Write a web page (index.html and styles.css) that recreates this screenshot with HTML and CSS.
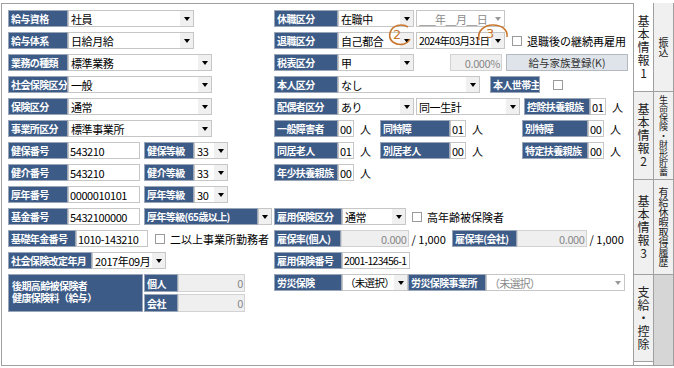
FILE: index.html
```html
<!DOCTYPE html>
<html>
	<head>
		<meta charset="utf-8">
		<title>基本情報1</title>
		<link rel="stylesheet" href="styles.css">
	</head>
	<body>
		<div class="window">
			<div class="panel">

				<!-- left column -->
				<div class="col-left">
					<div class="row">
						<div class="lbl w60">給与資格</div>
						<div class="sel w126"><span class="val">社員</span><i class="arr"></i></div>
					</div>
					<div class="row">
						<div class="lbl w60">給与体系</div>
						<div class="sel w126"><span class="val">日給月給</span><i class="arr"></i></div>
					</div>
					<div class="row">
						<div class="lbl w60">業務の種類</div>
						<div class="sel w144"><span class="val">標準業務</span><i class="arr"></i></div>
					</div>
					<div class="row">
						<div class="lbl w60">社会保険区分</div>
						<div class="sel w144"><span class="val">一般</span><i class="arr"></i></div>
					</div>
					<div class="row">
						<div class="lbl w60">保険区分</div>
						<div class="sel w144"><span class="val">通常</span><i class="arr"></i></div>
					</div>
					<div class="row">
						<div class="lbl w60">事業所区分</div>
						<div class="sel w144"><span class="val">標準事業所</span><i class="arr"></i></div>
					</div>
					<div class="row">
						<div class="lbl w60">健保番号</div>
						<div class="fld w72">543210</div>
						<div class="lbl w50 ml4">健保等級</div>
						<div class="sel w34"><span class="val">33</span><i class="arr"></i></div>
					</div>
					<div class="row">
						<div class="lbl w60">健介番号</div>
						<div class="fld w72">543210</div>
						<div class="lbl w50 ml4">健介等級</div>
						<div class="sel w34"><span class="val">33</span><i class="arr"></i></div>
					</div>
					<div class="row">
						<div class="lbl w60">厚年番号</div>
						<div class="fld w72">0000010101</div>
						<div class="lbl w50 ml4">厚年等級</div>
						<div class="sel w34"><span class="val">30</span><i class="arr"></i></div>
					</div>
					<div class="row">
						<div class="lbl w60">基金番号</div>
						<div class="fld w72">5432100000</div>
						<div class="lbl w114 ml4">厚年等級(65歳以上)</div>
						<div class="sel w14"><i class="arr"></i></div>
					</div>
					<div class="row row-gap">
						<div class="lbl w68">基礎年金番号</div>
						<div class="fld w72">1010-143210</div>
						<i class="chk ml7"></i>
						<span class="txt">二以上事業所勤務者</span>
					</div>
					<div class="row">
						<div class="lbl w84">社会保険改定年月</div>
						<div class="sel w74"><span class="val">2017年09月</span><i class="arr"></i></div>
					</div>
					<div class="block">
						<div class="lbl big">後期高齢被保険者<br>健康保険料（給与）</div>
						<div class="block-rows">
							<div class="block-row">
								<div class="lbl w34">個人</div>
								<div class="fld off w67">0</div>
							</div>
							<div class="block-row">
								<div class="lbl w34">会社</div>
								<div class="fld off w67">0</div>
							</div>
						</div>
					</div>
				</div>

				<!-- middle column -->
				<div class="col-mid">
					<div class="row">
						<div class="lbl w64">休職区分</div>
						<div class="sel w76"><span class="val">在職中</span><i class="arr"></i></div>
						<div class="sel w89 ml2 dim"><span class="val">___年__月__日</span><i class="arr"></i></div>
					</div>
					<div class="row">
						<div class="lbl w64">退職区分</div>
						<div class="sel w76"><span class="val">自己都合</span><i class="arr"></i></div>
						<div class="sel w89 ml2 tight"><span class="val">2024年03月31日</span><i class="arr"></i></div>
						<i class="chk ml7"></i>
						<span class="txt">退職後の継続再雇用</span>
					</div>
					<div class="row">
						<div class="lbl w64">税表区分</div>
						<div class="sel w76"><span class="val">甲</span><i class="arr"></i></div>
						<div class="fld off w52 ml36">0.000%</div>
						<button class="btn">給与家族登録(K)</button>
					</div>
					<div class="row">
						<div class="lbl w64">本人区分</div>
						<div class="sel w142"><span class="val">なし</span><i class="arr"></i></div>
						<div class="lbl w50 ml10">本人世帯主</div>
						<i class="chk ml13"></i>
					</div>
					<div class="row">
						<div class="lbl w64">配偶者区分</div>
						<div class="sel w76"><span class="val">あり</span><i class="arr"></i></div>
						<div class="sel w104 ml2"><span class="val">同一生計</span><i class="arr"></i></div>
						<div class="lbl w66 ml4">控除扶養親族</div>
						<div class="fld w16">01</div>
						<span class="unit">人</span>
					</div>
					<div class="row">
						<div class="lbl w64">一般障害者</div>
						<div class="fld w16">00</div>
						<span class="unit">人</span>
						<div class="lbl w70 ml6">同特障</div>
						<div class="fld w16">01</div>
						<span class="unit">人</span>
						<div class="lbl w66 ml36">別特障</div>
						<div class="fld w16">00</div>
						<span class="unit">人</span>
					</div>
					<div class="row">
						<div class="lbl w64">同居老人</div>
						<div class="fld w16">01</div>
						<span class="unit">人</span>
						<div class="lbl w70 ml6">別居老人</div>
						<div class="fld w16">00</div>
						<span class="unit">人</span>
						<div class="lbl w66 ml36">特定扶養親族</div>
						<div class="fld w16">00</div>
						<span class="unit">人</span>
					</div>
					<div class="row">
						<div class="lbl w64">年少扶養親族</div>
						<div class="fld w16">00</div>
						<span class="unit">人</span>
					</div>
					<div class="row"></div>
					<div class="row">
						<div class="lbl w68">雇用保険区分</div>
						<div class="sel w64"><span class="val">通常</span><i class="arr"></i></div>
						<i class="chk ml6"></i>
						<span class="txt">高年齢被保険者</span>
					</div>
					<div class="row row-gap">
						<div class="lbl w68">雇保率(個人)</div>
						<div class="fld off w68">0.000</div>
						<span class="per">/ 1,000</span>
						<div class="lbl w66">雇保率(会社)</div>
						<div class="fld off w70">0.000</div>
						<span class="per">/ 1,000</span>
					</div>
					<div class="row">
						<div class="lbl w68">雇用保険番号</div>
						<div class="fld w68 tight">2001-123456-1</div>
					</div>
					<div class="row">
						<div class="lbl w68">労災保険</div>
						<div class="sel w66 tight"><span class="val">（未選択）</span><i class="arr"></i></div>
						<div class="lbl w78">労災保険事業所</div>
						<div class="sel w139 dim"><span class="val">（未選択）</span><i class="arr"></i></div>
					</div>
				</div>

				<!-- hand-drawn markers -->
				<svg class="mark mark2" width="28" height="24" viewBox="0 0 28 24">
					<path d="M21 4 C15 0 5 2 3 10 C1 18 9 23 17 21 C20 20 22 18 23 16" fill="none" stroke="#c9772e" stroke-width="1.6"/>
					<text x="6" y="16" font-size="13" fill="#c9772e" font-family="DejaVu Sans, sans-serif">2</text>
				</svg>
				<svg class="mark mark3" width="34" height="22" viewBox="0 0 34 22">
					<path d="M3 17 C1 8 8 2 17 2 C26 2 32 7 31 14" fill="none" stroke="#c9772e" stroke-width="1.6"/>
					<text x="10" y="15" font-size="13" fill="#c9772e" font-family="DejaVu Sans, sans-serif">3</text>
				</svg>
			</div>

			<div class="tabs">
				<div class="tab-col">
					<div class="tab on t1">基本情報1</div>
					<div class="tab t2">基本情報2</div>
					<div class="tab t3">基本情報3</div>
					<div class="tab t4">支給・控除</div>
				</div>
				<div class="tab-col">
					<div class="tab t1 sm">振込</div>
					<div class="tab t2 sm xs">生命保険・財形貯蓄</div>
					<div class="tab t3 sm">有給休暇取得履歴</div>
					<div class="tab-rest"></div>
				</div>
			</div>
		</div>
	</body>
</html>
```

FILE: styles.css
```css
* {
	box-sizing: border-box;
}

body {
	margin: 0;
	font-family: "Noto Sans CJK JP", "DejaVu Sans", sans-serif;
	font-size: 11px;
	color: #000;
	background: #fff;
}

.window {
	display: flex;
	margin: 3px 0 0 1px;
	height: 363px;
	border-bottom: 1px solid #a0a0a0;
}

.panel {
	position: relative;
	width: 633px;
	border: 1px solid #a0a0a0;
	border-bottom: none;
	border-right: none;
	padding: 6px 0 0 6px;
	display: flex;
	gap: 2px;
}

.col-left {
	width: 264px;
}

.col-mid {
	width: 356px;
}

.row {
	display: flex;
	align-items: center;
	height: 17px;
	margin-bottom: 5px;
}

.row-gap {
	margin-top: 2px;
}

/* labels */
.lbl {
	height: 17px;
	display: flex;
	align-items: center;
	padding-left: 2px;
	background: #3d5b87;
	border: 1px solid #9aa6b8;
	color: #fff;
	font-weight: bold;
	font-size: 10px;
	white-space: nowrap;
	overflow: hidden;
	letter-spacing: -0.6px;
}

/* inputs */
.fld, .sel {
	height: 17px;
	display: flex;
	align-items: center;
	background: #fff;
	border: 1px solid #c6c6c6;
	white-space: nowrap;
	overflow: hidden;
	letter-spacing: -0.4px;
}

.fld {
	padding: 0 1px;
}

.fld.off {
	background: #efefef;
	color: #888;
	justify-content: flex-end;
	border-color: #d2d2d2;
}

.tight {
	font-size: 10.5px;
	letter-spacing: -0.7px;
}

.sel .val {
	flex: 1;
	padding-left: 2px;
	overflow: hidden;
}

.sel .arr {
	width: 13px;
	height: 15px;
	background: #f0f0f0;
	display: flex;
	align-items: center;
	justify-content: center;
}

.sel .arr::after {
	content: "";
	border-left: 3px solid transparent;
	border-right: 3px solid transparent;
	border-top: 4px solid #000;
}

.sel.w14 .arr {
	width: 12px;
	margin-left: auto;
}

.sel.dim {
	color: #8a8a8a;
	letter-spacing: -0.8px;
}

.sel.dim .arr {
	background: #fff;
}

.sel.dim .arr::after {
	border-top-color: #9a9a9a;
}

.chk {
	width: 10px;
	height: 10px;
	border: 1px solid #9a9a9a;
	background: #fff;
	flex: none;
}

.txt {
	margin-left: 5px;
	white-space: nowrap;
}

.unit {
	width: 20px;
	padding-left: 6px;
}

.per {
	width: 44px;
	padding-left: 3px;
	white-space: nowrap;
}

.btn {
	margin-left: 4px;
	width: 122px;
	height: 17px;
	padding: 0;
	font-family: inherit;
	font-size: 10.5px;
	color: #333;
	background: #dfe4ea;
	border: 1px solid #b4b9c0;
}

/* bottom-left block */
.block {
	display: flex;
}

.lbl.big {
	width: 135px;
	height: 38px;
	font-size: 10px;
	line-height: 12px;
	padding: 0 0 2px 3px;
	margin-right: 1px;
}

.block-rows {
	display: flex;
	flex-direction: column;
	gap: 2px;
}

.block-row {
	display: flex;
}

.block-row .lbl, .block-row .fld {
	height: 18px;
}

/* widths */
.w14 { width: 14px; }
.w16 { width: 16px; }
.w34 { width: 34px; }
.w50 { width: 50px; }
.w52 { width: 52px; }
.w60 { width: 60px; }
.w64 { width: 64px; }
.w66 { width: 66px; }
.w67 { width: 67px; }
.w68 { width: 68px; }
.w70 { width: 70px; }
.w72 { width: 72px; }
.w74 { width: 74px; }
.w76 { width: 76px; }
.w78 { width: 78px; }
.w84 { width: 84px; }
.w89 { width: 89px; }
.w104 { width: 104px; }
.w114 { width: 114px; }
.w126 { width: 126px; }
.w139 { width: 139px; }
.w142 { width: 142px; }
.w144 { width: 144px; }

.ml2 { margin-left: 2px; }
.ml4 { margin-left: 4px; }
.ml6 { margin-left: 6px; }
.ml7 { margin-left: 7px; }
.ml10 { margin-left: 10px; }
.ml13 { margin-left: 13px; }
.ml36 { margin-left: 36px; }
.ml38 { margin-left: 38px; }

/* circled numbers drawn over the form */
.mark {
	position: absolute;
}

.mark2 {
	left: 385px;
	top: 19px;
}

.mark3 {
	left: 474px;
	top: 19px;
}

/* side tabs */
.tabs {
	display: flex;
	border-left: 1px solid #a0a0a0;
}

.tab-col {
	width: 20px;
	display: flex;
	flex-direction: column;
	border-right: 1px solid #a0a0a0;
}

.tab {
	writing-mode: vertical-rl;
	text-orientation: upright;
	display: flex;
	align-items: center;
	justify-content: center;
	background: #f0f0f0;
	border-bottom: 1px solid #a0a0a0;
	font-size: 12px;
	letter-spacing: 1px;
	color: #222;
	white-space: nowrap;
	overflow: hidden;
}

.tab.on {
	background: #fff;
}

.tab.sm {
	font-size: 10px;
	letter-spacing: 0;
}

.tab.xs {
	font-size: 9px;
}

.t1 { height: 89px; }
.t2 { height: 88px; }
.t3 { height: 95px; }
.t4 { height: 87px; }

.tab-rest {
	flex: 1;
	background: #d6d6d6;
}
```
